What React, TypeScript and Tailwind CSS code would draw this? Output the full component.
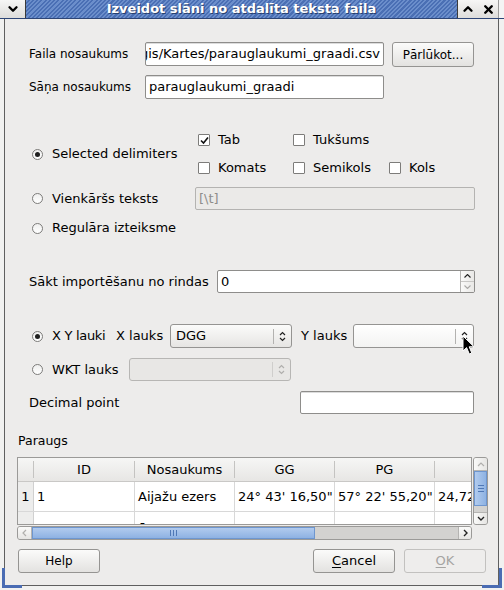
import React from "react";
import { ChevronDown, ChevronUp, X } from "lucide-react";

type Kids = { children?: React.ReactNode; className?: string };

const Radio = ({ checked = false }: { checked?: boolean }) => (
	<span className="flex h-[11px] w-[11px] shrink-0 items-center justify-center rounded-full border border-[#7d7c7a] bg-gradient-to-b from-[#efefee] to-white">
		{checked && <span className="h-[5px] w-[5px] rounded-full bg-[#202020]" />}
	</span>
);

const Check = ({ checked = false }: { checked?: boolean }) => (
	<span className="flex h-[12px] w-[12px] shrink-0 items-center justify-center rounded-[1px] border border-[#7d7c7a] bg-white">
		{checked && (
			<svg width="9" height="9" viewBox="0 0 9 9">
				<path d="M1 4.5 L3.5 7 L8 1.5" fill="none" stroke="#111" strokeWidth="1.6" />
			</svg>
		)}
	</span>
);

const UpDown = ({ color = "#222" }: { color?: string }) => (
	<svg width="7" height="11" viewBox="0 0 7 11">
		<path d="M1 4 L3.5 1.5 L6 4 M1 7 L3.5 9.5 L6 7" fill="none" stroke={color} strokeWidth="1.2" />
	</svg>
);

const Field = ({ children, className = "" }: Kids) => (
	<div className={`flex items-center overflow-hidden rounded-[2px] border border-[#8e8d8b] bg-white px-[3px] text-[13px] shadow-[inset_0_1px_0_#dcdcdc] ${className}`}>
		{children}
	</div>
);

const Btn = ({ children, className = "" }: Kids) => (
	<div className={`flex items-center justify-center rounded-[3px] border border-[#959492] bg-gradient-to-b from-[#fbfbfa] to-[#e3e2e0] ${className}`}>
		{children}
	</div>
);

const Combo = ({ text, className = "", muted = false }: { text?: string; className?: string; muted?: boolean }) => (
	<div
		className={`flex items-center rounded-[3px] border ${
			muted
				? "border-[#b7b6b4] bg-[#e8e7e5]"
				: "border-[#959492] bg-gradient-to-b from-[#fbfbfa] to-[#e6e5e3]"
		} ${className}`}>
		<span className="flex-1 pl-[5px] text-[13px]">{text}</span>
		<span className={`h-[15px] w-px ${muted ? "bg-[#cfcecc]" : "bg-[#b3b2b0]"}`} />
		<span className="flex w-[17px] justify-center">
			<UpDown color={muted ? "#b0afad" : "#222"} />
		</span>
	</div>
);

const TitleBar = () => (
	<div className="flex h-[19px] shrink-0 border-b border-[#2d4576]">
		<div className="flex w-[26px] items-center justify-center border-r border-[#3b3b3b] bg-gradient-to-b from-[#f6f6f5] to-[#dedddb]">
			<ChevronDown size={14} strokeWidth={4} className="text-black" />
		</div>
		<div className="flex flex-1 items-center justify-center bg-[repeating-linear-gradient(135deg,#6b8ecb_0px,#6b8ecb_1.5px,#4a6fb4_1.5px,#4a6fb4_3px)]">
			<span className="text-[13px] font-bold text-white [text-shadow:1px_1px_0_#28406e]">
				Izveidot slāni no atdalīta teksta faila
			</span>
		</div>
		<div className="flex border-l border-[#3b3b3b] bg-gradient-to-b from-[#f6f6f5] to-[#dedddb]">
			<span className="flex w-[20px] items-center justify-center">
				<ChevronUp size={14} strokeWidth={4} className="text-black" />
			</span>
			<span className="flex w-[20px] items-center justify-center">
				<X size={13} strokeWidth={4.5} className="text-black" />
			</span>
		</div>
		<div className="w-[6px] border-l border-[#9a9a9a] bg-[#f4f4f4]" />
	</div>
);

const headers = ["ID", "Nosaukums", "GG", "PG", ""];
const widths = ["w-[101px]", "w-[100px]", "w-[100px]", "w-[100px]", "w-[100px]"];
const rows = [
	["1", "1", "Aijažu ezers", "24° 43' 16,50\"", "57° 22' 55,20\"", "24,72097"],
	["2", "2", "Āraišu ezers", "25° 14' 19,00\"", "57° 14' 51,10\"", "25,23861"],
];

const Preview = () => (
	<div className="mt-[8px] flex gap-[1px] pl-[12px]">
		<div className="flex w-[455px] flex-col">
			<div className="h-[68px] overflow-hidden border border-[#9b9a98] bg-white text-[13px]">
				{/* header */}
				<div className="flex h-[24px] items-center border-b border-[#c9c8c6] bg-gradient-to-b from-[#f6f6f5] to-[#e7e6e4]">
					<span className="w-[15px] shrink-0" />
					{headers.map((h, i) => (
						<React.Fragment key={i}>
							<span className="h-[17px] w-px shrink-0 bg-[#c4c3c1]" />
							<span className={`${i === 0 ? "w-[100px]" : "w-[99px]"} shrink-0 text-center`}>{h}</span>
						</React.Fragment>
					))}
				</div>
				{rows.map((r, ri) => (
					<div key={ri} className="flex h-[30px] border-b border-[#d8d8d8]">
						<span className="flex w-[16px] shrink-0 items-center justify-center border-r border-[#d0d0d0] bg-[#ededec]">
							{ri === 0 ? r[0] : ""}
						</span>
						{r.slice(1).map((c, ci) => (
							<span
								key={ci}
								className={`${widths[ci]} flex shrink-0 items-center overflow-hidden whitespace-nowrap border-r border-[#d8d8d8] pl-[3px] ${ri === 1 ? "pt-[6px]" : ""}`}>
								{ri === 1 && ci !== 1 ? "" : c}
							</span>
						))}
					</div>
				))}
			</div>
			{/* horizontal scrollbar */}
			<div className="mt-[1px] flex h-[14px] overflow-hidden rounded-[3px] border border-[#9b9a98] bg-[#d3d2d0]">
				<span className="flex w-[14px] items-center justify-center border-r border-[#b5b4b2] bg-gradient-to-b from-[#fafaf9] to-[#e6e5e3]">
					<svg width="5" height="8" viewBox="0 0 5 8">
						<path d="M4 1 L1 4 L4 7" fill="none" stroke="#b0afad" strokeWidth="1.2" />
					</svg>
				</span>
				<span className="flex w-[283px] items-center justify-center border border-[#6e96cf] bg-gradient-to-b from-[#b1cbee] to-[#8eb2e3]">
					<svg width="7" height="6" viewBox="0 0 7 6">
						<path d="M0.5 0 V6 M3.5 0 V6 M6.5 0 V6" stroke="#4f78b6" strokeWidth="1" />
					</svg>
				</span>
				<span className="flex-1" />
				<span className="flex w-[13px] items-center justify-center border-l border-[#b5b4b2] bg-gradient-to-b from-[#fafaf9] to-[#e6e5e3]">
					<svg width="5" height="8" viewBox="0 0 5 8">
						<path d="M1 1 L4 4 L1 7" fill="none" stroke="#222" strokeWidth="1.4" />
					</svg>
				</span>
			</div>
		</div>
		{/* vertical scrollbar */}
		<div className="flex h-[68px] w-[15px] flex-col overflow-hidden rounded-[3px] border border-[#9b9a98] bg-[#d3d2d0]">
			<span className="flex h-[13px] items-center justify-center border-b border-[#b5b4b2] bg-gradient-to-r from-[#fafaf9] to-[#e6e5e3]">
				<svg width="8" height="5" viewBox="0 0 8 5">
					<path d="M1 4 L4 1 L7 4" fill="none" stroke="#b0afad" strokeWidth="1.2" />
				</svg>
			</span>
			<span className="flex h-[35px] items-center justify-center border border-[#6e96cf] bg-gradient-to-r from-[#b1cbee] to-[#8eb2e3]">
				<svg width="6" height="7" viewBox="0 0 6 7">
					<path d="M0 0.5 H6 M0 3.5 H6 M0 6.5 H6" stroke="#4f78b6" strokeWidth="1" />
				</svg>
			</span>
			<span className="flex-1" />
			<span className="flex h-[12px] items-center justify-center border-t border-[#b5b4b2] bg-gradient-to-r from-[#fafaf9] to-[#e6e5e3]">
				<svg width="8" height="5" viewBox="0 0 8 5">
					<path d="M1 1 L4 4 L7 1" fill="none" stroke="#222" strokeWidth="1.4" />
				</svg>
			</span>
		</div>
	</div>
);

export default function App() {
	return (
		<div className="relative flex h-[590px] w-[504px] flex-col overflow-hidden bg-[#f1f1f0] font-['DejaVu_Sans',sans-serif] text-[13px] text-black">
			<TitleBar />

			<div className="ml-[4px] mr-[5px] flex h-[567px] flex-col border-x border-b border-[#5f5f5f] bg-[#edeceb]">
				{/* file name */}
				<div className="mt-[23px] flex h-[25px] items-start pl-[24px]">
					<span className="w-[116px] text-[12px] leading-[24px]">Faila nosaukums</span>
					<Field className="h-[24px] w-[239px] justify-end">
						<span className="whitespace-nowrap">/home/lietotajs/qgis/Kartes/parauglaukumi_graadi.csv</span>
					</Field>
					<Btn className="ml-[8px] h-[25px] w-[82px] text-[12px]">Pārlūkot...</Btn>
				</div>

				{/* layer name */}
				<div className="mt-[8px] flex h-[24px] items-center pl-[24px]">
					<span className="w-[116px] text-[12px]">Sāņa nosaukums</span>
					<Field className="h-[24px] w-[239px]">parauglaukumi_graadi</Field>
				</div>

				{/* delimiters */}
				<div className="mt-[31px] flex h-[48px] items-center pl-[27px]">
					<div className="flex w-[166px] items-center">
						<Radio checked />
						<span className="ml-[9px]">Selected delimiters</span>
					</div>
					<div className="grid grid-cols-[95px_96px_80px] grid-rows-[20px_20px] gap-y-[8px]">
						<label className="flex items-center gap-[8px]"><Check checked />Tab</label>
						<label className="flex items-center gap-[8px]"><Check />Tukšums</label>
						<span />
						<label className="flex items-center gap-[8px]"><Check />Komats</label>
						<label className="flex items-center gap-[8px]"><Check />Semikols</label>
						<label className="flex items-center gap-[8px]"><Check />Kols</label>
					</div>
				</div>

				<div className="mt-[9px] flex h-[23px] items-center pl-[27px]">
					<div className="flex w-[163px] items-center">
						<Radio />
						<span className="ml-[9px]">Vienkāršs teksts</span>
					</div>
					<div className="flex h-[23px] w-[280px] items-center rounded-[2px] border border-[#b4b3b1] bg-[#ebeae8] px-[3px] text-[#8e8d8b]">
						[\t]
					</div>
				</div>

				<div className="mt-[8px] flex h-[20px] items-center pl-[27px]">
					<Radio />
					<span className="ml-[9px]">Regulāra izteiksme</span>
				</div>

				{/* start row */}
				<div className="mt-[32px] flex h-[23px] items-center pl-[24px]">
					<span className="w-[188px]">Sākt importēšanu no rindas</span>
					<div className="flex h-[23px] w-[258px] overflow-hidden rounded-[2px] border border-[#8e8d8b] bg-white">
						<span className="flex flex-1 items-center pl-[3px]">0</span>
						<div className="flex w-[14px] flex-col border-l border-[#b5b4b2] bg-gradient-to-r from-[#fafaf9] to-[#e9e8e6]">
							<span className="flex flex-1 items-center justify-center border-b border-[#c8c7c5]">
								<svg width="7" height="4" viewBox="0 0 7 4">
									<path d="M0.5 3.5 L3.5 0.5 L6.5 3.5" fill="none" stroke="#222" strokeWidth="1.1" />
								</svg>
							</span>
							<span className="flex flex-1 items-center justify-center">
								<svg width="7" height="4" viewBox="0 0 7 4">
									<path d="M0.5 0.5 L3.5 3.5 L6.5 0.5" fill="none" stroke="#aaa9a7" strokeWidth="1.1" />
								</svg>
							</span>
						</div>
					</div>
				</div>

				{/* geometry */}
				<div className="mt-[31px] flex h-[24px] items-center pl-[27px]">
					<div className="flex w-[84px] items-center">
						<Radio checked />
						<span className="ml-[9px] tracking-[-0.3px]">X Y lauki</span>
					</div>
					<span className="w-[54px]">X lauks</span>
					<Combo text="DGG" className="h-[24px] w-[122px]" />
					<span className="ml-[9px] w-[52px]">Y lauks</span>
					<Combo className="h-[24px] w-[121px] from-white to-[#f3f3f2]" />
				</div>

				<div className="mt-[10px] flex h-[23px] items-center pl-[27px]">
					<div className="flex w-[97px] items-center">
						<Radio />
						<span className="ml-[9px]">WKT lauks</span>
					</div>
					<Combo muted className="h-[23px] w-[162px]" />
				</div>

				<div className="mt-[10px] flex h-[23px] items-center pl-[24px]">
					<span className="w-[271px]">Decimal point</span>
					<Field className="h-[23px] w-[174px]" />
				</div>

				<div className="mt-[19px] flex h-[16px] items-center pl-[13px] text-[12.5px]">Paraugs</div>

				<Preview />

				{/* dialog buttons */}
				<div className="mt-[9px] flex h-[24px] pl-[13px] pr-[12px]">
					<Btn className="h-[24px] w-[82px] text-[12px]">Help</Btn>
					<Btn className="ml-auto h-[24px] w-[82px]">
						<span><span className="underline underline-offset-2">C</span>ancel</span>
					</Btn>
					<div className="ml-[9px] flex h-[24px] w-[82px] items-center justify-center rounded-[3px] border border-[#c2c1bf] bg-[#eeedec] text-[#a5a4a2]">
						<span><span className="underline underline-offset-2">O</span>K</span>
					</div>
				</div>
			</div>

			{/* resize corners */}
			<div className="absolute bottom-[2px] left-[2px] h-[20px] w-[20px] border-b-[3px] border-l-[3px] border-[#4a6cb3]" />
			<div className="absolute bottom-[2px] right-[2px] h-[20px] w-[20px] border-b-[3px] border-r-[3px] border-[#4a6cb3]" />

			{/* mouse pointer */}
			<svg className="absolute left-[462px] top-[335px]" width="14" height="21" viewBox="0 0 14 21">
				<path d="M1 1 L1 16 L4.6 12.6 L7.3 19 L9.8 18 L7.2 11.8 L12 11.8 Z" fill="#000" stroke="#fff" strokeWidth="1" />
			</svg>
		</div>
	);
}
